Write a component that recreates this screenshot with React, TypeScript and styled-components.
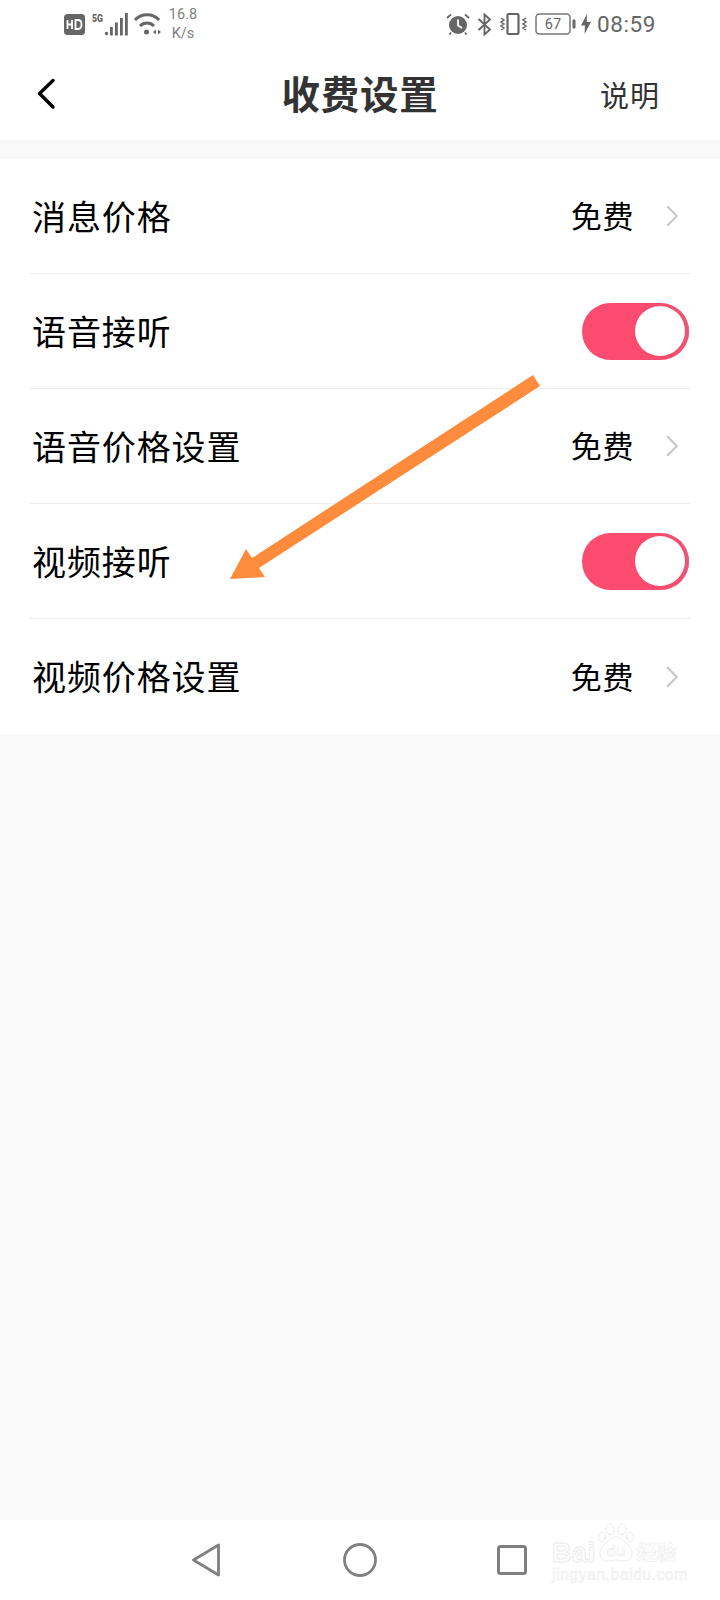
import React from "react";
import styled, { createGlobalStyle } from "styled-components";

const GlobalStyle = createGlobalStyle`
  html, body {
    margin: 0;
    padding: 0;
    background: #f9f9f9;
  }
  * {
    box-sizing: border-box;
  }
`;

const Page = styled.div`
  position: relative;
  width: 720px;
  height: 1600px;
  display: flex;
  flex-direction: column;
  background: #f9f9f9;
  overflow: hidden;
  font-family: "Noto Sans CJK SC", "Noto Sans", sans-serif;
`;

const StatusBar = styled.div`
  height: 48px;
  flex: none;
  display: flex;
  align-items: center;
  justify-content: space-between;
  padding: 0 64px;
  background: #fff;
  color: #666;
`;

const StatusGroup = styled.div`
  display: flex;
  align-items: center;
`;

const NetSpeed = styled.div`
  width: 30px;
  margin-left: 6px;
  font-family: "Roboto", "Liberation Sans", sans-serif;
  font-size: 14.5px;
  line-height: 19px;
  text-align: center;
  color: #808080;
`;

const Clock = styled.span`
  margin-left: 6px;
  font-family: "Roboto", "Liberation Sans", sans-serif;
  font-size: 22.5px;
  letter-spacing: 0.6px;
  color: #666;
`;

const NavBar = styled.header`
  height: 92px;
  flex: none;
  display: grid;
  grid-template-columns: 1fr auto 1fr;
  align-items: center;
  padding: 0 60px 0 36px;
  background: #fff;
`;

const BackButton = styled.button`
  width: 22px;
  height: 32px;
  padding: 0;
  border: none;
  background: none;
  display: flex;
`;

const Title = styled.h1`
  margin: 0 0 0 24px;
  padding-bottom: 4px;
  font-size: 38.5px;
  line-height: 1;
  font-weight: 700;
  letter-spacing: 0.7px;
  color: #333;
`;

const Explain = styled.span`
  justify-self: end;
  font-size: 29px;
  letter-spacing: 1px;
  color: #333;
`;

const List = styled.section`
  margin-top: 19px;
  padding: 0 30px;
  background: #fff;
`;

const Row = styled.div`
  height: 115px;
  display: flex;
  align-items: center;
  justify-content: space-between;
  border-bottom: 1px solid #ececec;

  &:last-child {
    border-bottom: none;
  }
`;

const Label = styled.span`
  padding: 0 0 2px 2px;
  font-size: 34px;
  letter-spacing: 0.9px;
  color: #000;
`;

const Value = styled.div`
  display: flex;
  align-items: center;
  gap: 32px;
  padding-right: 12px;
  font-size: 31px;
  letter-spacing: 0.6px;
  color: #000;
`;

const ValueText = styled.span`
  padding-bottom: 3px;
`;

const Toggle = styled.span<{ $on: boolean }>`
  width: 107px;
  height: 57px;
  margin-right: 1px;
  padding: 0 4px;
  display: flex;
  align-items: center;
  justify-content: ${(p) => (p.$on ? "flex-end" : "flex-start")};
  border-radius: 29px;
  background: ${(p) => (p.$on ? "#fb4b6e" : "#ddd")};
  box-shadow: inset -3px 0 2px -1px #d9607c;
`;

const Knob = styled.span`
  width: 50px;
  height: 50px;
  border-radius: 50%;
  background: #fff;
`;

const Spacer = styled.div`
  flex: 1;
`;

const BottomBar = styled.nav`
  height: 80px;
  flex: none;
  display: flex;
  align-items: center;
  gap: 120px;
  padding-left: 191px;
  background: #fff;
`;

const Arrow = styled.svg`
  position: absolute;
  left: 0;
  top: 0;
  pointer-events: none;
`;

const Watermark = styled.div`
  position: absolute;
  left: 552px;
  top: 1523px;
  width: 132px;
  color: #fff;
  font-family: "Liberation Sans", "Noto Sans CJK SC", sans-serif;
  -webkit-text-stroke: 1px #ececec;
`;

const WatermarkTop = styled.div`
  display: flex;
  align-items: flex-end;
  height: 40px;
`;

const WatermarkLatin = styled.span`
  font-size: 27px;
  line-height: 20px;
  font-weight: 700;
  letter-spacing: 0.6px;
`;

const WatermarkCn = styled.span`
  margin-left: 1px;
  font-size: 20px;
  line-height: 20px;
  font-weight: 700;
  -webkit-text-stroke: 0.6px #ececec;
`;

const WatermarkPaw = styled.svg`
  flex: none;
`;

const WatermarkUrl = styled.div`
  margin-top: 3px;
  font-size: 16px;
  line-height: 18px;
  letter-spacing: 0.4px;
  -webkit-text-stroke: 0.6px #ececec;
`;

const Chevron = () => (
  <svg width="12" height="22" viewBox="0 0 12 22" fill="none">
    <path d="M1.200 1.200 10.800 11 1.200 20.800" stroke="#c8c8c8" strokeWidth="2.200" />
  </svg>
);

const HdBadge = () => (
  <svg width="21" height="21" viewBox="0 0 21 21">
    <rect width="21" height="21" rx="3.500" fill="#666" />
    <path
      d="M3.500 6v9M3.500 10.500h4.500M8 6v9M11.500 6v9h2.500c2 0 3.500-1.500 3.500-4.500S16 6 14 6z"
      fill="none"
      stroke="#fff"
      strokeWidth="1.800"
    />
  </svg>
);

const Signal = () => (
  <svg width="36" height="24" viewBox="0 0 36 24" style={{ marginLeft: 7 }}>
    <text x="0" y="10" fontFamily="Roboto, sans-serif" fontSize="11" fontWeight="900" textLength="11" lengthAdjust="spacingAndGlyphs" fill="#666">
      5G
    </text>
    <circle cx="14.500" cy="21.500" r="1.700" fill="#666" />
    <rect x="18" y="15" width="2.800" height="8.500" fill="#666" />
    <rect x="23" y="10.500" width="2.800" height="13" fill="#666" />
    <rect x="28" y="6" width="2.800" height="17.500" fill="#666" />
    <rect x="33" y="1" width="2.800" height="22.500" fill="#666" />
  </svg>
);

const Wifi = () => (
  <svg width="28" height="24" viewBox="0 0 28 24" fill="none" style={{ marginLeft: 6 }}>
    <path d="M1 8C7 1 19 1 25 8" stroke="#666" strokeWidth="3" />
    <path d="M6 14C10 10 16 10 20 14" stroke="#666" strokeWidth="3" />
    <circle cx="12.500" cy="20" r="2.500" fill="#666" />
    <path d="M22 17.500 19 20 22 22.500zM24 17.500 27 20 24 22.500z" fill="#666" />
  </svg>
);

const Alarm = () => (
  <svg width="24" height="22" viewBox="0 0 24 22" fill="none">
    <circle cx="12" cy="12" r="9" fill="#666" />
    <path d="M12 6.500V12.500L16 15" stroke="#fff" strokeWidth="1.800" />
    <path d="M1 5 5 1.500M23 5 19 1.500M5 19.500 3.500 21.500M19 19.500 20.500 21.500" stroke="#666" strokeWidth="1.800" />
  </svg>
);

const Bluetooth = () => (
  <svg width="15" height="23" viewBox="0 0 15 23" fill="none" style={{ marginLeft: 7 }}>
    <path d="M1.500 6 13 16.500 7.500 21.500V1.500L13 6.500 1.500 17" stroke="#666" strokeWidth="1.900" />
  </svg>
);

const Vibrate = () => (
  <svg width="27" height="22" viewBox="0 0 27 22" fill="none" style={{ marginLeft: 8 }}>
    <rect x="7.500" y="1" width="11" height="20" rx="1.500" stroke="#666" strokeWidth="2.200" />
    <path
      d="M1 5 4 7 1 9 4 11 1 13 4 15 1 17M26 5 23 7 26 9 23 11 26 13 23 15 26 17"
      stroke="#666"
      strokeWidth="1.500"
    />
  </svg>
);

const Battery = () => (
  <svg width="41" height="22" viewBox="0 0 41 22" fill="none" style={{ marginLeft: 8 }}>
    <rect x="1" y="1" width="34" height="20" rx="3.500" stroke="#777" strokeWidth="1.500" />
    <text x="18" y="16.200" textAnchor="middle" fontFamily="Roboto, sans-serif" fontSize="14.500" fill="#666">
      67
    </text>
    <rect x="37.500" y="6.500" width="3" height="9" rx="1" fill="#666" />
  </svg>
);

const Bolt = () => (
  <svg width="10" height="20" viewBox="0 0 10 20" style={{ marginLeft: 5 }}>
    <path d="M6 0 0 11.500H4L3.500 20 10 8H5.800z" fill="#666" />
  </svg>
);

type RowItem =
  | { label: string; kind: "price"; value: string }
  | { label: string; kind: "toggle"; on: boolean };

const rows: RowItem[] = [
  { label: "消息价格", kind: "price", value: "免费" },
  { label: "语音接听", kind: "toggle", on: true },
  { label: "语音价格设置", kind: "price", value: "免费" },
  { label: "视频接听", kind: "toggle", on: true },
  { label: "视频价格设置", kind: "price", value: "免费" },
];

export default function App() {
  return (
    <Page>
      <GlobalStyle />
      <StatusBar>
        <StatusGroup>
          <HdBadge />
          <Signal />
          <Wifi />
          <NetSpeed>
            16.8
            <br />
            K/s
          </NetSpeed>
        </StatusGroup>
        <StatusGroup>
          <Alarm />
          <Bluetooth />
          <Vibrate />
          <Battery />
          <Bolt />
          <Clock>08:59</Clock>
        </StatusGroup>
      </StatusBar>

      <NavBar>
        <BackButton aria-label="back">
          <svg width="20" height="32" viewBox="0 0 20 32" fill="none">
            <path d="M17 2.500 3.500 15.500 17 29" stroke="#000" strokeWidth="3.400" strokeLinecap="round" strokeLinejoin="round" />
          </svg>
        </BackButton>
        <Title>收费设置</Title>
        <Explain>说明</Explain>
      </NavBar>

      <List>
        {rows.map((row) => (
          <Row key={row.label}>
            <Label>{row.label}</Label>
            {row.kind === "price" ? (
              <Value>
                <ValueText>{row.value}</ValueText>
                <Chevron />
              </Value>
            ) : (
              <Toggle $on={row.on}>
                <Knob />
              </Toggle>
            )}
          </Row>
        ))}
      </List>

      <Spacer />

      <BottomBar>
        <svg width="32" height="36" viewBox="0 0 32 36" fill="none">
          <path d="M27.500 3 2.500 18 27.500 33z" stroke="#808080" strokeWidth="2.800" strokeLinejoin="round" />
        </svg>
        <svg width="34" height="34" viewBox="0 0 34 34" fill="none">
          <circle cx="17" cy="17" r="15.500" stroke="#808080" strokeWidth="2.800" />
        </svg>
        <svg width="30" height="30" viewBox="0 0 30 30" fill="none">
          <rect x="1.500" y="1.500" width="27" height="27" rx="2" stroke="#808080" strokeWidth="3" />
        </svg>
      </BottomBar>

      <Arrow width="720" height="1600" viewBox="0 0 720 1600">
        <path d="M533 375 540 386 259 568 265 577 230 579 246 549 252 558z" fill="#ff8c3c" />
      </Arrow>

      <Watermark>
        <WatermarkTop>
          <WatermarkLatin>Bai</WatermarkLatin>
          <WatermarkPaw width="40" height="40" viewBox="0 0 38 40" fill="#fff" stroke="#ececec" strokeWidth="1">
            <ellipse cx="13" cy="6" rx="4" ry="5.500" />
            <ellipse cx="25" cy="6" rx="4" ry="5.500" />
            <ellipse cx="5" cy="14" rx="3.500" ry="5" />
            <ellipse cx="33" cy="14" rx="3.500" ry="5" />
            <path d="M19 14c6 0 9 5 13 9 5 5 4 14-3 15-4 .6-7-1-10-1s-6 1.600-10 1C2 37 1 28 6 23c4-4 7-9 13-9z" />
            <text x="19" y="33" textAnchor="middle" fontSize="15" fontFamily="Liberation Sans, sans-serif" fontWeight="700" strokeWidth="0.700">
              du
            </text>
          </WatermarkPaw>
          <WatermarkCn>经验</WatermarkCn>
        </WatermarkTop>
        <WatermarkUrl>jingyan.baidu.com</WatermarkUrl>
      </Watermark>
    </Page>
  );
}
